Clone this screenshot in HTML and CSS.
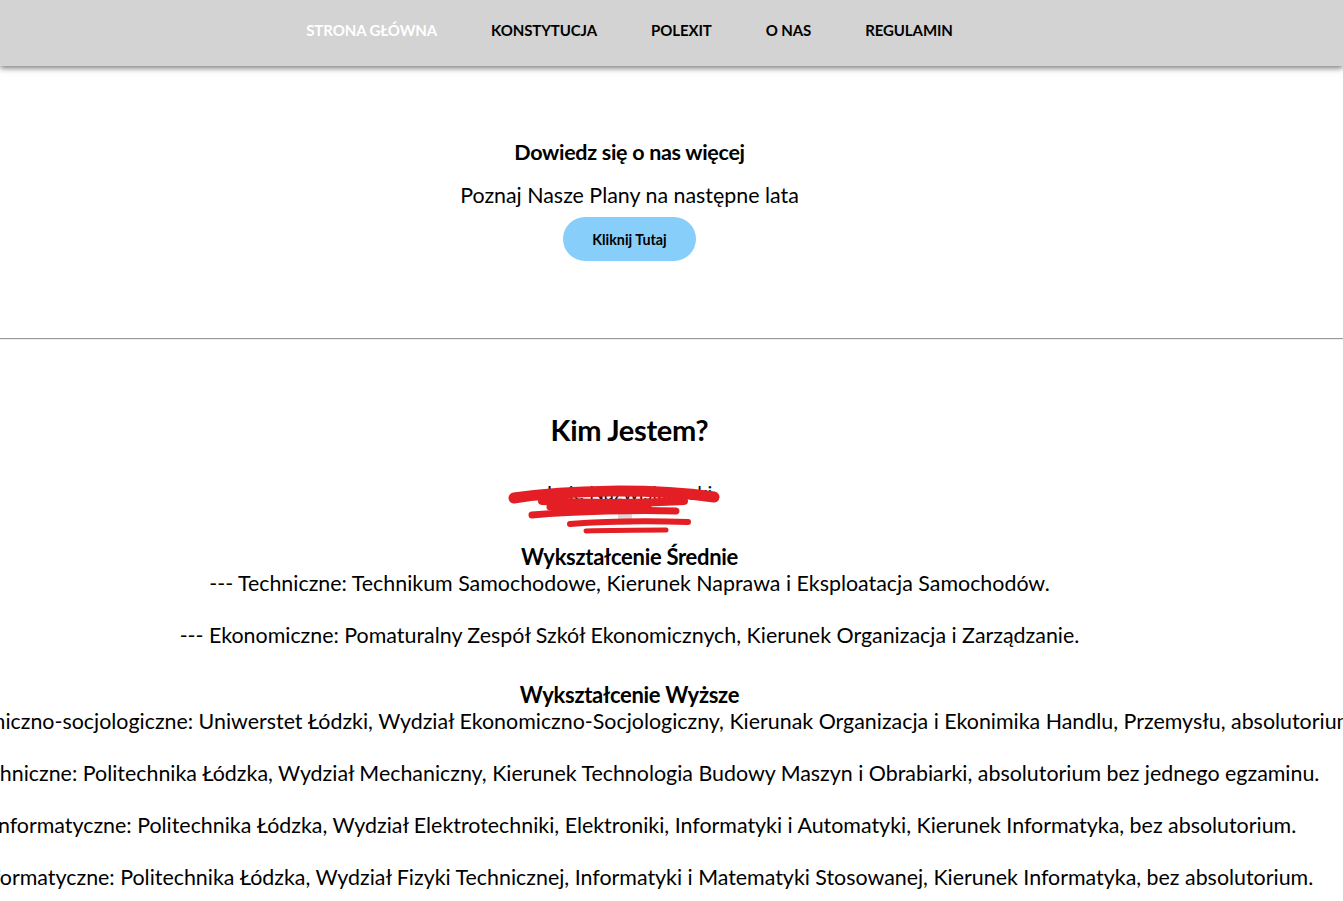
FILE: index.html
```html
<!DOCTYPE html>
<html lang="pl">
<head>
<meta charset="utf-8">
<title>Strona główna</title>
<link rel="stylesheet" href="styles.css">
</head>
<body>
<header class="topbar">
  <nav class="menu">
    <a class="menu-item active" href="#">Strona Główna</a>
    <a class="menu-item" href="#">Konstytucja</a>
    <a class="menu-item" href="#">Polexit</a>
    <a class="menu-item" href="#">O nas</a>
    <a class="menu-item" href="#">Regulamin</a>
  </nav>
</header>

<main>
  <section class="intro page">
    <h2 class="intro-title">Dowiedz się o nas więcej</h2>
    <p class="intro-sub">Poznaj Nasze Plany na następne lata</p>
    <a class="btn" href="#">Kliknij Tutaj</a>
  </section>

  <hr class="divider">

  <section class="about page">
    <h1 class="about-title">Kim Jestem?</h1>
    <div class="person">
      <p class="person-name">Imię Nazwiskowski</p>
      <div class="person-photo"></div>
      <svg class="scribble" width="220" height="56" viewBox="0 0 220 56" aria-hidden="true">
        <g fill="none" stroke="#e31e24" stroke-linecap="round">
          <path d="M6 20 C60 12 140 10 206 19" stroke-width="11"/>
          <path d="M34 23 C90 26 140 25 176 23" stroke-width="8"/>
          <path d="M42 29 C80 31 120 30 140 28" stroke-width="7"/>
          <path d="M24 37 C70 33 130 32 168 33" stroke-width="7"/>
          <path d="M62 46 C100 43 150 43 180 44" stroke-width="6"/>
          <path d="M78 53 C110 52 140 52 158 52" stroke-width="5"/>
        </g>
      </svg>
    </div>

    <h3 class="edu-title">Wykształcenie Średnie</h3>
    <p class="edu-line">--- Techniczne: Technikum Samochodowe, Kierunek Naprawa i Eksploatacja Samochodów.</p>
    <div class="blank"></div>
    <p class="edu-line">--- Ekonomiczne: Pomaturalny Zespół Szkół Ekonomicznych, Kierunek Organizacja i Zarządzanie.</p>
    <div class="blank"></div>

    <h3 class="edu-title edu-title-second">Wykształcenie Wyższe</h3>
    <p class="edu-line">--- Ekonomiczno-socjologiczne: Uniwerstet Łódzki, Wydział Ekonomiczno-Socjologiczny, Kierunak Organizacja i Ekonimika Handlu, Przemysłu, absolutorium.</p>
    <div class="blank"></div>
    <p class="edu-line">--- Techniczne: Politechnika Łódzka, Wydział Mechaniczny, Kierunek Technologia Budowy Maszyn i Obrabiarki, absolutorium bez jednego egzaminu.</p>
    <div class="blank"></div>
    <p class="edu-line">--- Informatyczne: Politechnika Łódzka, Wydział Elektrotechniki, Elektroniki, Informatyki i Automatyki, Kierunek Informatyka, bez absolutorium.</p>
    <div class="blank"></div>
    <p class="edu-line">--- Informatyczne: Politechnika Łódzka, Wydział Fizyki Technicznej, Informatyki i Matematyki Stosowanej, Kierunek Informatyka, bez absolutorium.</p>
  </section>
</main>
</body>
</html>
```

FILE: styles.css
```css
html, body {
  margin: 0;
  padding: 0;
  overflow-x: hidden;
  background: #ffffff;
}

body {
  font-family: Lato, "Open Sans", "DejaVu Sans", sans-serif;
  color: #000;
}

.topbar {
  height: 66px;
  background: #d3d3d3;
  box-shadow: 0 2px 6px rgba(0, 0, 0, 0.55);
  position: relative;
  z-index: 2;
}

.menu {
  width: 1259px;
  height: 100%;
  display: flex;
  justify-content: center;
  align-items: center;
}

.menu-item {
  padding: 0 27px;
  font-size: 15px;
  font-weight: 700;
  text-transform: uppercase;
  text-decoration: none;
  color: #000;
  letter-spacing: -0.1px;
  line-height: 20px;
  margin-top: -6px;
}

.menu-item.active {
  color: #ffffff;
}

.page {
  width: 1259px;
  display: flex;
  flex-direction: column;
  align-items: center;
}

.intro {
  padding-top: 73px;
}

.intro-title {
  margin: 0;
  font-size: 21.5px;
  font-weight: 700;
  line-height: 26px;
  letter-spacing: -0.3px;
}

.intro-sub {
  margin: 17px 0 0;
  font-size: 21.4px;
  line-height: 26px;
}

.btn {
  margin-top: 9px;
  width: 133px;
  height: 44px;
  border-radius: 22px;
  background: #87cefa;
  color: #000;
  text-decoration: none;
  font-size: 14.3px;
  font-weight: 700;
  display: flex;
  align-items: center;
  justify-content: center;
}

.divider {
  margin: 77px 0 0;
  border: 0;
  border-top: 1px solid #9a9a9a;
  border-bottom: 1px solid #eeeeee;
  height: 0;
}

.about {
  padding-top: 73px;
  padding-bottom: 20px;
}

.about-title {
  margin: 0;
  font-size: 29px;
  font-weight: 700;
  line-height: 34px;
  letter-spacing: -0.3px;
}

.person {
  position: relative;
  margin-top: 32px;
  display: flex;
  flex-direction: column;
  align-items: center;
}

.person-name {
  margin: 0;
  font-size: 20px;
  line-height: 26px;
  color: #111;
}

.person-photo {
  width: 14px;
  height: 14px;
  margin: 6px 0 21px;
  background: #d9d9d9;
  border-radius: 2px;
  transform: translateX(-5px);
}

.scribble {
  position: absolute;
  left: -122px;
  top: -1px;
  margin-left: 50%;
}

.edu-title {
  margin: 0 0 2px;
  font-size: 22px;
  font-weight: 700;
  line-height: 22px;
  letter-spacing: -0.3px;
}

.edu-title-second {
  margin-top: 10px;
}

.edu-line {
  margin: 0;
  font-size: 21.4px;
  line-height: 26px;
  white-space: nowrap;
  flex-shrink: 0;
}

.blank {
  height: 26px;
}
```
